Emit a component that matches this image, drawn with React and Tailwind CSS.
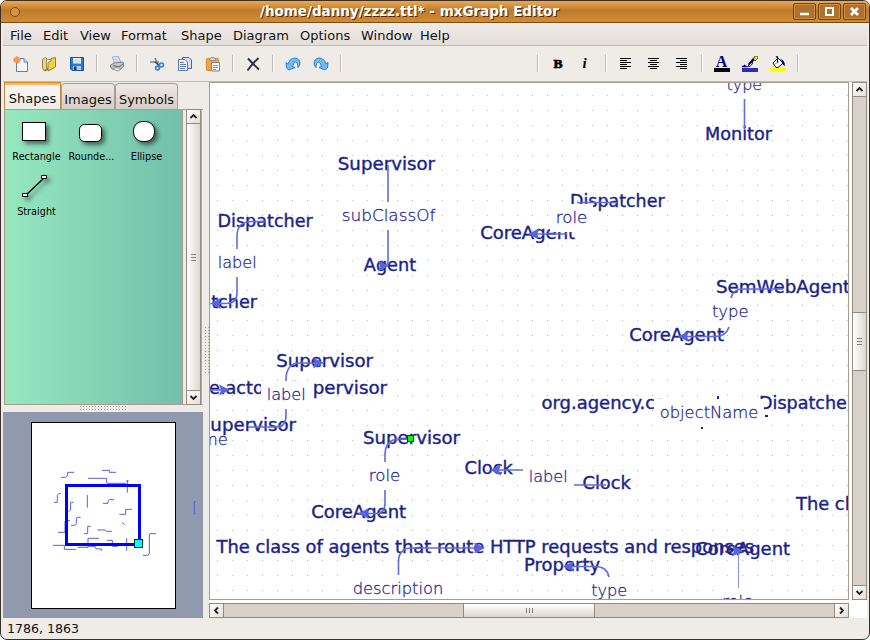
import React from "react";

const NODES = [
  ["Supervisor", 338.3, 435, 170],
  ["Dispatcher", 218, 312.7, 227],
  ["Dispatcher", 162, 257, 308],
  ["Agent", 364.3, 416, 271],
  ["CoreAgent", 480.7, 575, 239],
  ["Dispatcher", 570.5, 664.5, 207],
  ["SemWebAgent", 716.5, 850, 293],
  ["CoreAgent", 629.7, 724, 341],
  ["org.agency.co", 542, 666, 409],
  ["Dispatcher", 759.5, 854, 409],
  ["Supervisor", 276.7, 373, 367],
  ["e.actor", 209.5, 271, 394],
  ["Supervisor", 290, 387, 394],
  ["Supervisor", 199.3, 296, 431],
  ["Supervisor", 363.5, 460, 444],
  ["CoreAgent", 311.7, 406, 518],
  ["Clock", 465, 512.7, 474],
  ["Clock", 583, 630.7, 489],
  ["The class of agents that route HTTP requests and responses", 217, 754, 553],
  ["Property", 524.6, 600, 571],
  ["CoreAgent", 695.7, 790, 555],
  ["Monitor", 705.5, 772, 140],
  ["The class", 796.5, 879, 510],
];

const LABELS = [
  ["type", 727.3, 761.3, 90],
  ["subClassOf", 342.5, 434.7, 221],
  ["label", 218.5, 256, 268],
  ["role", 556.5, 586.5, 223],
  ["type", 712.7, 747.7, 317],
  ["objectName", 660.5, 757.5, 418],
  ["label", 267.5, 305, 400],
  ["name", 182, 227, 444.5],
  ["role", 369.5, 399.5, 481],
  ["label", 529.5, 567, 482],
  ["description", 353.5, 442.5, 594],
  ["type", 592, 626.5, 596],
  ["role", 723, 752.5, 607],
];

const EDGES = [
  "M388 165V260Q388 266 384 266",
  "M265 221.5H252Q237 221.5 237 236V293Q237 303.5 226 303.5H218",
  "M617 202.5H577M567 234H535",
  "M783 289H743Q733 289 731 298M729 327Q726 336.5 715 336.5H686",
  "M248 427H277Q286 427 286 415V380Q286 363 300 363H315",
  "M210 390H222",
  "M408 439H400Q385 439 385 455V503Q385 513.5 376 513.5H366",
  "M523 470H498M573 485H606",
  "M398.5 575V562Q398.5 548 412 548H477",
  "M609 577Q607 566.5 595 566.5H571",
  "M744.5 98V130",
];

const ARROWS = [
  [389, 266, 1], [210, 303.5, -1], [528, 234, -1], [678, 336.5, -1], [324, 363, 1], [230, 390, 1],
  [358, 513.5, -1], [490, 470, -1], [485, 548, 1], [563, 566.5, -1], [743, 551, 1],
];

function Canvas() {
  return (
    <svg width="638" height="516" viewBox="210 83 638 516" className="block bg-white">
      <defs>
        <pattern id="grid" x="217" y="95" width="15" height="15" patternUnits="userSpaceOnUse">
          <rect width="1" height="1" fill="#b8b8b8" />
        </pattern>
      </defs>
      <rect x="210" y="83" width="638" height="516" fill="url(#grid)" />
      <g fontFamily="'DejaVu Sans', sans-serif" fontSize="18.1" fill="#1a238c" stroke="#1a238c" strokeWidth="0.4">
        {NODES.map(([t, a, b, y], i) => (
          <text key={i} x={a - 0.5} y={y} textLength={b - a + 0.6} lengthAdjust="spacingAndGlyphs">{t}</text>
        ))}
      </g>
      <g fill="none" stroke="#626be0" strokeWidth="1.6">
        {EDGES.map((d) => <path key={d} d={d} />)}
        <path d="M738.5 588V552" strokeWidth="1" stroke="#8890ee" />
      </g>
      <g fill="#5a63e0">
        {ARROWS.map(([x, y, s]) => (
          <path key={x + "-" + y} d="M0 0L-11 -5.5L-9 0L-11 5.5Z" transform={`translate(${x} ${y}) scale(${s} 1)`} />
        ))}
      </g>
      <g fontFamily="'DejaVu Sans', sans-serif" fontSize="16.6" fontWeight="200">
        {LABELS.map(([t, a, b, y], i) => (
          <g key={i}>
            {t !== "name" && <rect x={Math.round(a - 6.5)} y={Math.round(y - 19)} width={Math.round(b - a + 13)} height="28" fill="#fff" />}
            <text x={a - 0.8} y={y} textLength={b - a + 1.6} lengthAdjust="spacingAndGlyphs" fill="#1f2890" stroke="#1f2890" strokeWidth="0.28">{t}</text>
          </g>
        ))}
      </g>
      <g fill="#1a238c">
        <rect x="717" y="396" width="2" height="3" />
        <rect x="701" y="427" width="2" height="2" />
        <rect x="765" y="415" width="3" height="2" />
      </g>
      <rect x="407.5" y="435.5" width="6" height="6" fill="#00ff00" stroke="#004000" />
    </svg>
  );
}

function Outline() {
  return (
    <svg width="200" height="206" viewBox="9 96 600 618" className="block shrink-0">
      <rect x="9" y="96" width="600" height="618" fill="#9199ae" />
      <rect x="94.5" y="127.500" width="432" height="558" fill="#fff" stroke="#000" strokeWidth="3" />
      <g fill="none" stroke="#5a62d8" strokeWidth="3">
        <path d="M183 292H197L203 286V277H222M306 271H328V277H348M264 295H320V308L324 310H379M382 300V338M379 303H386" />
        <path d="M183 341H176L172 346V367H162M221 367H212V390L206 394M262 345V383M342 359H328L324 364V370H309M396 388H377V403H358M242 412H231L229 418V430L224 436H213M210 422H200M195 423V457H174M272 439H263V461H252M294 448V450H314L320 454H336M366 427L374 434M468 461H450L448 465V520L443 526H429" />
        <path d="M159 496H193V508H228M233 502H264V475H297M264 499H285L289 507H305V512M321 481H337V499H354M380 474V512M588 365H583V401H588" />
      </g>
      <rect x="199.500" y="316.500" width="219" height="177" fill="none" stroke="#0000ff" strokeWidth="9" />
      <rect x="403.500" y="478.500" width="24" height="24" fill="#00ffff" stroke="#003030" strokeWidth="3" />
    </svg>
  );
}

function Ico({ children }) {
  return (
    <span className="flex h-7 w-7 shrink-0 items-center justify-center">
      <svg width="16" height="16" viewBox="0 0 16 16" fill="none">{children}</svg>
    </span>
  );
}

function Sep() {
  return <span className="flex h-[17px] w-3 shrink-0 pl-[5px]"><i className="w-px bg-[#c4bcb4]" /><i className="w-px bg-white" /></span>;
}

function AlignIcon({ rows }) {
  return <Ico>{rows.map(([x, w], i) => <path key={i} d={`M${x} ${2.5 + i * 2}h${w}`} stroke="#000" />)}</Ico>;
}

function Toolbar() {
  return (
    <div className="flex h-9 shrink-0 items-center border-b border-[#c4bcb4] bg-[#efebe7] pl-1">
      <Ico>
        <path d="M3.500 2.500H11L14.500 6V15.500H3.500Z" fill="#f4f7fb" stroke="#6a7ba8" />
        <path d="M11 2.500V6H14.500" fill="#dce4f0" stroke="#6a7ba8" />
        <circle cx="4" cy="4" r="3.300" fill="#ff9a50" /><circle cx="4" cy="4" r="1.600" fill="#ffe040" /><path d="M4 0V8M0 4H8" stroke="#f05a30" strokeWidth=".6" />
      </Ico>
      <Ico>
        <path d="M1.500 3.500L4.500 1.500L6 3V13L3 14.500L1.500 12Z" fill="#f5d668" stroke="#9a8236" />
        <path d="M5.500 3.500H11.500V12H5.500Z" fill="#fff" stroke="#888c90" />
        <path d="M7 6.500L10 5V2.500L14.500 1.500V11L7 15Z" fill="#f2cf45" stroke="#96822e" />
        <path d="M4 15L7 13" stroke="#555" />
      </Ico>
      <Ico>
        <path d="M1.500 1.500H14.500V14.500H3L1.500 13Z" fill="#2879d0" stroke="#1755a4" />
        <path d="M4 2H12V7.500H4Z" fill="#f4f8fc" /><path d="M5 4H11M5 6H11" stroke="#aac8e4" />
        <path d="M4 10H12V14H4Z" fill="#bfc9d4" /><path d="M5 10.500H7.500V14H5Z" fill="#0c3a80" />
      </Ico>
      <Sep />
      <Ico>
        <path d="M3.500 1L9.500 0.500L12 7L6 8.500Z" fill="#e5f2ff" stroke="#88aade" />
        <path d="M5 3.500L9.500 3M6 5.500L10.500 5" stroke="#a8c4ea" />
        <path d="M1.500 9L5 7L14 6L15 10L10 14L2 12Z" fill="#c4c4c4" stroke="#858585" />
        <path d="M4 9.500L10 11L14 8" stroke="#666" /><path d="M3 13L9 15L13 12.500L7 11.500Z" fill="#eee" stroke="#999" />
      </Ico>
      <Sep />
      <Ico>
        <path d="M1 6H10M6 2L9 9L10 11" stroke="#7c8288" strokeWidth="1.600" />
        <path d="M6 6L10 9" stroke="#444" strokeWidth="1.400" />
        <circle cx="12.500" cy="9" r="2" stroke="#3880d0" strokeWidth="1.600" /><circle cx="8.500" cy="12" r="1.900" stroke="#3880d0" strokeWidth="1.600" />
      </Ico>
      <Ico>
        <path d="M5.500 1.500H12L14.500 4V12.500H5.500Z" fill="#dcdcf8" stroke="#62589a" />
        <path d="M1.500 3.500H8L10.500 6V14.500H1.500Z" fill="#edf2fd" stroke="#6575a9" />
        <path d="M3 6.500H7M3 8.500H9M3 10.500H9M3 12.500H8" stroke="#6680ba" />
      </Ico>
      <Ico>
        <rect x="1.500" y="2.500" width="12" height="12" rx="1" fill="#f5a43c" stroke="#df8320" />
        <path d="M4.500 3.500L6 1.500H9L10.500 3.500V4.500H4.500Z" fill="#ded5ca" stroke="#958b80" />
        <path d="M6.500 6.500H14.500V15H6.500Z" fill="#f1f4fa" stroke="#7785a4" /><path d="M8 9.500H13M8 11.500H13M8 13.500H11" stroke="#8898b6" />
      </Ico>
      <Sep />
      <Ico><path d="M3 2.500Q7 7 14 13.500M13.500 2Q7 8 2.500 14.500" stroke="#2c3238" strokeWidth="1.900" /></Ico>
      <Sep />
      <Ico><Swoosh /></Ico>
      <Ico><g transform="translate(16 0) scale(-1 1)"><Swoosh /></g></Ico>
      <Sep />
      <span className="w-[185px]" />
      <Sep />
      <span className="flex w-7 justify-center font-['Liberation_Serif',serif] text-[13.5px] leading-none font-bold text-black [-webkit-text-stroke:0.7px]">B</span>
      <span className="flex w-7 justify-center pr-[3px] font-['Liberation_Serif',serif] text-[15px] leading-none font-bold italic text-black">i</span>
      <Sep />
      <span className="flex w-[84px]">
        <AlignIcon rows={[[2, 11], [2, 7], [2, 11], [2, 7], [2, 11], [2, 7]]} />
        <AlignIcon rows={[[2, 11], [4, 7], [2, 11], [4, 7], [2, 11], [4, 7]]} />
        <AlignIcon rows={[[2, 11], [6, 7], [2, 11], [6, 7], [2, 11], [6, 7]]} />
      </span>
      <Sep />
      <Ico>
        <text x="7.500" y="11" textAnchor="middle" fontFamily="'Liberation Serif', serif" fontWeight="700" fontSize="16" fill="#000080">A</text>
        <rect y="12" width="16" height="4" fill="#000" />
      </Ico>
      <Ico>
        <path d="M15 1L10 7L7 10L6 8L11 2Z" fill="#000080" /><path d="M11.500 3L13 0H16V2L13 5Z" fill="#f4e800" stroke="#222" strokeWidth=".7" />
        <path d="M10 6L5.500 10.500H8L11 7Z" fill="#c0c0c0" stroke="#000" strokeWidth=".7" />
        <path d="M0 10.500H4L2 9" stroke="#000080" strokeWidth="1.300" /><rect y="12" width="16" height="4" fill="#2c2cc4" />
      </Ico>
      <Ico>
        <path d="M3 7L8 2L13 7L8 11.500H6Z" fill="#fff" stroke="#111" />
        <path d="M7.500 7V1.500Q7.500 0 6 1" stroke="#000080" strokeWidth="1.200" /><path d="M10 3Q15 4 15 10L12 8V5Z" fill="#000080" />
        <path d="M5 8L9 6" stroke="#999" /><rect y="12" width="16" height="4" fill="#ffff00" />
      </Ico>
      <Sep />
    </div>
  );
}

function Swoosh() {
  return (
    <path d="M1 6.500L3 8Q5 2 10 2Q15 2.500 15 8Q14.500 10 13 11.500Q13 6.500 10.500 6Q8.500 6 7.500 10.500L10 11.500L4 14L1.500 12Z" fill="#72b9f4" stroke="#2678c8" strokeWidth=".9" strokeLinejoin="round" />
  );
}

const CHEVRONS = { up: "M3.500 8L6.500 5L9.500 8", down: "M3.500 5L6.500 8L9.500 5", left: "M8 3.500L5 6.500L8 9.500", right: "M5 3.500L8 6.500L5 9.500" };

function ScrollButton({ dir }) {
  return (
    <div className="flex h-[15px] w-[15px] shrink-0 items-center justify-center border border-[#948a80] bg-linear-to-br from-white to-[#e3deda]">
      <svg width="13" height="13" viewBox="0 0 13 13" fill="none"><path d={CHEVRONS[dir]} stroke="#222" strokeWidth="1.800" /></svg>
    </div>
  );
}

function Tab({ children, active }) {
  return active ? (
    <div className="h-[27px] w-[57px] border border-b-0 border-[#c08a48] border-t-[#d88a28] bg-linear-to-b from-[#ffb860] from-6% via-[#f8f6f4] via-9% to-[#efebe7] pt-[7px] text-center text-[13px] leading-[17px]">{children}</div>
  ) : (
    <div className="mt-px h-[26px] rounded-t-sm border border-b-0 border-[#a89c92] bg-linear-to-b from-[#eee9e5] to-[#d8cdc6] pt-[7px] text-center text-[13px] leading-[17px] whitespace-nowrap">{children}</div>
  );
}

function ShapeItem({ label, children }) {
  return (
    <div className="flex h-[55px] w-[55px] flex-col items-center">
      <svg width="40" height="35" viewBox="4 0 40 35" className="shrink-0 overflow-visible drop-shadow-[3px_3px_2px_rgba(0,0,0,0.5)]" fill="#fff" stroke="#000">{children}</svg>
      <span className="text-[9.7px] leading-3 whitespace-nowrap text-black">{label}</span>
    </div>
  );
}

function ShapesPanel() {
  return (
    <div className="flex h-[296px] border border-r-0 border-[#a89c92]">
      <div className="w-[178px] border-r border-[#a89c92] bg-linear-to-r from-[#96e8bf] to-[#73bfab] pt-[6px] pl-1">
        <div className="grid grid-cols-[55px_55px_55px] justify-start">
          <ShapeItem label="Rectangle"><rect x="9.500" y="6.500" width="23" height="18" /></ShapeItem>
          <ShapeItem label="Rounde..."><rect x="11.500" y="8.500" width="22" height="17" rx="5" /></ShapeItem>
          <ShapeItem label="Ellipse"><rect x="10.500" y="5.500" width="21" height="20" rx="9" /></ShapeItem>
          <ShapeItem label="Straight"><path d="M13 24L30 8" strokeWidth="1.300" /><path d="M9.500 22.500H14.500V25.500H9.500ZM28.500 4.500H33.500V7.500H28.500Z" /></ShapeItem>
        </div>
      </div>
      <div className="-my-px ml-[3px] flex w-4 flex-col border-r border-[#b8aca2]">
        <ScrollButton dir="up" />
        <Thumb className="w-[15px] flex-1" />
        <ScrollButton dir="down" />
      </div>
    </div>
  );
}

function Thumb({ className, horizontal }) {
  return (
    <div className={"flex items-center justify-center border-[#948a80] " + (horizontal ? "border bg-linear-to-b from-white to-[#ddd6d0] " : "border-x bg-linear-to-r from-white to-[#ddd6d0] ") + className}>
      <svg width="7" height="7" viewBox="0 0 7 7" stroke="#887e74">
        <path d={horizontal ? "M0.500 1V6M3.500 1V6M6.500 1V6" : "M1 0.500H6M1 3.500H6M1 6.500H6"} />
      </svg>
    </div>
  );
}

function DotGrip({ w, h, id, x = 0, y = 0 }) {
  return (
    <svg width={w} height={h} className="block">
      <defs><pattern id={id} x={x} y={y} width="3" height="3" patternUnits="userSpaceOnUse"><rect width="1" height="1" fill="#a9a098" /></pattern></defs>
      <rect width={w} height={h} fill={`url(#${id})`} />
    </svg>
  );
}

function WindowButton({ children }) {
  return (
    <span className="flex h-[17px] w-[23px] items-center justify-center rounded-[2px] border border-[#75410c] bg-[#ae722e] shadow-[inset_0_0_0_1px_#cc9049]">
      <svg width="13" height="11" viewBox="0 0 13 11" fill="none">{children}</svg>
    </span>
  );
}

const MENUS = [
  ["File", "w-[33px]"], ["Edit", "w-[37px]"], ["View", "w-[41px]"], ["Format", "w-[60px]"], ["Shape", "w-[52px]"],
  ["Diagram", "w-[67px]"], ["Options", "w-[61px]"], ["Window", "w-[59px]"], ["Help", "w-[40px]"],
];

export default function App() {
  return (
    <div className="h-[640px] w-[870px] overflow-hidden bg-white font-['DejaVu_Sans',sans-serif] text-[13px] text-[#111]">
      <div className="flex h-full flex-col overflow-hidden rounded-[7px] border border-[#3a302a] bg-[#efebe7]">
        <header className="flex h-[22px] shrink-0 items-center justify-between border-b border-[#7c4a14] bg-linear-to-b from-[#f0a850] via-[#bd7b2b] via-45% to-[#d48c32] pr-[3px] pl-[9px]">
          <span className="h-[10px] w-[10px] rounded-full border border-[#7d4a14] bg-[#d69442]" />
          <svg width="310" height="22" className="ml-1">
            <g fontFamily="'DejaVu Sans', sans-serif" fontWeight="700" fontSize="13.300">
              <text x="7" y="16" textLength="299" lengthAdjust="spacingAndGlyphs" fill="#4a2c0c">/home/danny/zzzz.ttl* - mxGraph Editor</text>
              <text x="6" y="14.500" textLength="299" lengthAdjust="spacingAndGlyphs" fill="#fff">/home/danny/zzzz.ttl* - mxGraph Editor</text>
            </g>
          </svg>
          <span className="flex gap-[2px]">
            <WindowButton><path d="M2 8H11" stroke="#fff" strokeWidth="2.500" /></WindowButton>
            <WindowButton><rect x="3" y="2" width="7" height="7" stroke="#fff" strokeWidth="2" /></WindowButton>
            <WindowButton><path d="M3 2L10 9M10 2L3 9" stroke="#fff" strokeWidth="2.600" /></WindowButton>
          </span>
        </header>
        <div className="mx-[2px] flex min-h-0 flex-1 flex-col">
          <nav className="flex h-[23px] shrink-0 items-center border-b border-[#c4bcb4] bg-linear-to-b from-[#efebe7] to-[#e4deda] pt-[3px] pl-[2px]">
            {MENUS.map(([m, w]) => <span key={m} className={"shrink-0 pl-[5px] leading-4 whitespace-nowrap " + w}>{m}</span>)}
          </nav>
          <Toolbar />
          <main className="flex min-h-0 flex-1">
            <aside className="flex w-[200px] shrink-0 flex-col">
              <div className="ml-px flex h-[27px] shrink-0">
                <Tab active>Shapes</Tab>
                <div className="w-[54px]"><Tab>Images</Tab></div>
                <div className="w-[63px]"><Tab>Symbols</Tab></div>
              </div>
              <div className="ml-px"><ShapesPanel /></div>
              <div className="flex h-[7px] shrink-0 justify-center pt-px"><DotGrip id="hgrip" w={47} h={5} /></div>
              <Outline />
            </aside>
            <div className="flex w-[6px] shrink-0 items-center justify-center"><DotGrip id="vgrip" w={5} h={47} x={1} /></div>
            <section className="flex h-[536px] w-[658px] shrink-0 flex-col bg-white">
              <div className="flex h-[518px] gap-[3px]">
                <div className="h-[518px] border border-[#a89c90]"><Canvas /></div>
                <div className="flex h-[518px] w-[15px] flex-col bg-[#d9d0ca]">
                  <ScrollButton dir="up" />
                  <div className="flex-1 border-x border-[#948a80] pt-[215px]"><Thumb className="-mx-px h-[59px] border-y" /></div>
                  <ScrollButton dir="down" />
                </div>
              </div>
              <div className="mt-[3px] flex h-[15px] w-[640px] bg-[#d9d0ca]">
                <ScrollButton dir="left" />
                <div className="flex-1 border-y border-[#948a80] pl-[239px]"><Thumb horizontal className="-my-px h-[15px] w-[132px]" /></div>
                <ScrollButton dir="right" />
              </div>
            </section>
          </main>
          <footer className="flex h-[21px] shrink-0 items-center pt-[2px] pl-1 text-[12.600px]">1786, 1863</footer>
        </div>
      </div>
    </div>
  );
}
